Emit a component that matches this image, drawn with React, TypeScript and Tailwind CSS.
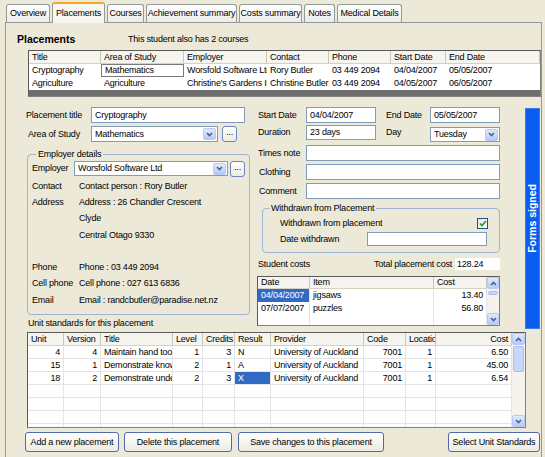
import React from 'react';

type Col = { label: string; w: string; right?: boolean; headRight?: boolean };

const tabs = [
  { label: 'Overview', w: 'w-[44px]' },
  { label: 'Placements', w: 'w-[53px]', active: true },
  { label: 'Courses', w: 'w-[37px]' },
  { label: 'Achievement summary', w: 'w-[91px]' },
  { label: 'Costs summary', w: 'w-[63px]' },
  { label: 'Notes', w: 'w-[31px]' },
  { label: 'Medical Details', w: 'w-[65px]' },
];

const placementCols: Col[] = [
  { label: 'Title', w: 'w-[72px]' },
  { label: 'Area of Study', w: 'w-[83px]' },
  { label: 'Employer', w: 'w-[83px]' },
  { label: 'Contact', w: 'w-[62px]' },
  { label: 'Phone', w: 'w-[62px]' },
  { label: 'Start Date', w: 'w-[55px]' },
  { label: 'End Date', w: 'flex-1' },
];

const placements = [
  ['Cryptography', 'Mathematics', 'Worsfold Software Ltd', 'Rory Butler', '03 449 2094', '04/04/2007', '05/05/2007'],
  ['Agriculture', 'Agriculture', "Christine's Gardens Inc", 'Christine Butler', '03 449 2094', '04/05/2007', '06/05/2007'],
];

const unitCols: Col[] = [
  { label: 'Unit', w: 'w-[36px]', right: true },
  { label: 'Version', w: 'w-[37px]', right: true },
  { label: 'Title', w: 'w-[72px]' },
  { label: 'Level', w: 'w-[30px]', right: true },
  { label: 'Credits', w: 'w-[32px]', right: true },
  { label: 'Result', w: 'w-[36px]' },
  { label: 'Provider', w: 'w-[93px]' },
  { label: 'Code', w: 'w-[42px]', right: true },
  { label: 'Locatio', w: 'w-[30px]', right: true },
  { label: 'Cost', w: 'flex-1', right: true, headRight: true },
];

const units = [
  ['4', '4', 'Maintain hand tools', '1', '3', 'N', 'University of Auckland', '7001', '1', '6.50'],
  ['15', '1', 'Demonstrate knowledge', '2', '1', 'A', 'University of Auckland', '7001', '1', '45.00'],
  ['18', '2', 'Demonstrate understanding', '2', '3', 'X', 'University of Auckland', '7001', '1', '6.54'],
  ['', '', '', '', '', '', '', '', '', ''],
  ['', '', '', '', '', '', '', '', '', ''],
  ['', '', '', '', '', '', '', '', '', ''],
  ['', '', '', '', '', '', '', '', '', ''],
];

const costCols: Col[] = [
  { label: 'Date', w: 'w-[52px]' },
  { label: 'Item', w: 'w-[124px]' },
  { label: 'Cost', w: 'flex-1', right: true },
];

const costs = [
  ['04/04/2007', 'jigsaws', '13.40'],
  ['07/07/2007', 'puzzles', '56.80'],
  ['', '', ''],
];

const contactRows = [
  ['Contact', 'Contact person : Rory Butler'],
  ['Address', 'Address : 26 Chandler Crescent'],
  ['', 'Clyde'],
  ['', 'Central Otago 9330'],
  ['', ''],
  ['Phone', 'Phone : 03 449 2094'],
  ['Cell phone', 'Cell phone : 027 613 6836'],
  ['Email', 'Email : randcbutler@paradise.net.nz'],
];

function TextBox({ value = '', className = '' }: { value?: string; className?: string }) {
  return (
    <div className={`bg-white border border-[#7F9DB9] flex items-center pl-[3px] whitespace-nowrap overflow-hidden ${className}`}>
      {value}
    </div>
  );
}

function Arrow({ up = false }: { up?: boolean }) {
  return (
    <svg width="7" height="5" viewBox="0 0 7 5">
      <path d={up ? 'M1 4L3.5 1.5L6 4' : 'M1 1L3.5 3.5L6 1'} stroke="#4D6185" strokeWidth="1.6" fill="none" />
    </svg>
  );
}

function DropButton({ className = '' }: { className?: string }) {
  return (
    <div className={`rounded-[2px] border border-[#B7CAF5] bg-linear-to-b from-[#E1EAFE] to-[#B4CAF8] flex items-center justify-center ${className}`}>
      <Arrow />
    </div>
  );
}

function DropButtonUp() {
  return (
    <div className="h-[12px] rounded-[2px] border border-[#B7CAF5] bg-linear-to-b from-[#E1EAFE] to-[#B4CAF8] flex items-center justify-center">
      <Arrow up />
    </div>
  );
}

function Combo({ value, className = '' }: { value: string; className?: string }) {
  return (
    <div className={`bg-white border border-[#7F9DB9] flex items-center pl-[3px] pr-px ${className}`}>
      <span className="flex-1 whitespace-nowrap overflow-hidden">{value}</span>
      <DropButton className="w-[13px] h-[12px]" />
    </div>
  );
}

function Ellipsis({ className = '' }: { className?: string }) {
  return (
    <div className={`w-[15px] rounded-[3px] border border-[#6F84C0] bg-linear-to-b from-white to-[#ECEBE6] flex items-center justify-center pb-[3px] ${className}`}>
      ...
    </div>
  );
}

function ScrollBar({ thumb, className = '' }: { thumb: string; className?: string }) {
  return (
    <div className={`flex flex-col bg-[#F4F3EE] ${className}`}>
      <DropButtonUp />
      <div className="flex-1 px-px">
        <div className={`rounded-[2px] border border-[#A9BFF3] bg-[#C6D6FC] ${thumb}`} />
      </div>
      <DropButton className="h-[12px]" />
    </div>
  );
}

function HeaderRow({ cols, className = '' }: { cols: Col[]; className?: string }) {
  return (
    <div className={`flex bg-[#F5F4EE] border-b border-[#D6D2C2] ${className}`}>
      {cols.map((c, i) => (
        <div
          key={i}
          className={`${c.w} px-[3px] flex items-center border-r border-[#CBC7B8] whitespace-nowrap overflow-hidden ${c.headRight ? 'justify-end' : ''}`}
        >
          {c.label}
        </div>
      ))}
    </div>
  );
}

function Tabs() {
  return (
    <div className="flex items-end h-[20px] pl-[6px] gap-[2px]">
      {tabs.map((t) =>
        t.active ? (
          <div
            key={t.label}
            className={`${t.w} h-[21px] -mb-px relative z-10 border border-b-0 border-[#919B9C] border-t-[#F5A623] border-t-2 rounded-t-[3px] bg-[#F7F6F1] flex items-center justify-center whitespace-nowrap`}
          >
            {t.label}
          </div>
        ) : (
          <div
            key={t.label}
            className={`${t.w} h-[18px] border border-b-0 border-[#919B9C] rounded-t-[3px] bg-linear-to-b from-white to-[#ECEBE6] flex items-center justify-center whitespace-nowrap`}
          >
            {t.label}
          </div>
        ),
      )}
    </div>
  );
}

function PlacementsGrid() {
  return (
    <div className="mt-[4px] ml-[22px] w-[513px] h-[47px] border border-[#808080] border-l-[#5A5A5A] border-t-[#5A5A5A] flex flex-col overflow-hidden bg-white">
      <HeaderRow cols={placementCols} className="h-[13px] shrink-0" />
      {placements.map((row, r) => (
        <div key={r} className="flex h-[13px] shrink-0">
          {row.map((cell, i) => (
            <div
              key={i}
              className={`${placementCols[i].w} px-[3px] flex items-center whitespace-nowrap overflow-hidden ${
                r === 0 && i === 1 ? 'border border-[#7A7A7A] px-[2px]' : ''
              }`}
            >
              {cell}
            </div>
          ))}
        </div>
      ))}
      <div className="flex-1 bg-[#6E6E6E]" />
    </div>
  );
}

function EmployerGroup() {
  return (
    <fieldset className="mt-[6px] ml-[1px] w-[223px] border border-[#9FB3D6] rounded-[4px] px-[4px] pb-[6px]">
      <legend className="ml-[4px] px-[2px] leading-[12px]">Employer details</legend>
      <div className="mt-px h-[15px] flex items-center">
        <div className="w-[42px]">Employer</div>
        <Combo value="Worsfold Software Ltd" className="w-[154px] h-[15px]" />
        <Ellipsis className="ml-[2px] h-[16px]" />
      </div>
      <div className="mt-[2px]">
        {contactRows.map(([label, value], i) => (
          <div key={i} className="h-[16.3px] flex items-center">
            <div className="w-[47px] whitespace-nowrap">{label}</div>
            <div className="whitespace-nowrap">{value}</div>
          </div>
        ))}
      </div>
    </fieldset>
  );
}

function LeftColumn() {
  return (
    <div className="ml-[20px] w-[224px] mt-[10px]">
      <div className="h-[16px] flex items-center">
        <div className="w-[65px] whitespace-nowrap">Placement title</div>
        <TextBox value="Cryptography" className="w-[154px] h-[16px]" />
      </div>
      <div className="mt-[3px] h-[16px] flex items-center">
        <div className="w-[65px] pl-[2px] whitespace-nowrap">Area of Study</div>
        <Combo value="Mathematics" className="w-[127px] h-[16px]" />
        <Ellipsis className="ml-[4px] h-[16px]" />
      </div>
      <EmployerGroup />
      <div className="mt-[2px] h-[12px] pl-[2px] flex items-center">Unit standards for this placement</div>
    </div>
  );
}

function CostsGrid() {
  return (
    <div className="mt-[4px] w-[243px] h-[50px] border border-[#808080] border-l-[#5A5A5A] border-t-[#5A5A5A] flex bg-white overflow-hidden">
      <div className="flex-1 flex flex-col">
        <HeaderRow cols={costCols} className="h-[12px] shrink-0" />
        {costs.map((row, r) => (
          <div key={r} className="flex h-[13px] shrink-0">
            {row.map((cell, i) => (
              <div
                key={i}
                className={`${costCols[i].w} px-[3px] flex items-center whitespace-nowrap overflow-hidden border-r border-[#E4E4E4] ${
                  costCols[i].right ? 'justify-end' : ''
                } ${r === 0 && i === 0 ? 'bg-[#316AC5] text-white' : ''}`}
              >
                {cell}
              </div>
            ))}
          </div>
        ))}
      </div>
      <ScrollBar thumb="mt-[2px] h-[4px]" className="w-[12px]" />
    </div>
  );
}

function RightColumn() {
  return (
    <div className="ml-[7px] w-[243px] mt-[10px]">
      <div className="h-[16px] flex items-center">
        <div className="w-[49px] pl-px whitespace-nowrap">Start Date</div>
        <TextBox value="04/04/2007" className="w-[70px] h-[16px]" />
        <div className="ml-[10px] w-[44px] whitespace-nowrap">End Date</div>
        <TextBox value="05/05/2007" className="w-[70px] h-[16px]" />
      </div>
      <div className="mt-[2px] h-[17px] flex items-start">
        <div className="w-[49px] pl-px h-[15px] flex items-center">Duration</div>
        <TextBox value="23 days" className="w-[70px] h-[15px]" />
        <div className="ml-[10px] w-[44px] h-[15px] flex items-center">Day</div>
        <Combo value="Tuesday" className="mt-[2px] w-[70px] h-[15px]" />
      </div>
      <div className="mt-[3px] h-[16px] flex items-center">
        <div className="w-[49px] pl-px whitespace-nowrap">Times note</div>
        <TextBox className="w-[194px] h-[16px]" />
      </div>
      <div className="mt-[3px] h-[16px] flex items-center">
        <div className="w-[49px] pl-[2px]">Clothing</div>
        <TextBox className="w-[194px] h-[16px]" />
      </div>
      <div className="mt-[3px] h-[16px] flex items-center">
        <div className="w-[49px] pl-[2px]">Comment</div>
        <TextBox className="w-[194px] h-[16px]" />
      </div>
      <fieldset className="mt-[3px] ml-[5px] w-[238px] border border-[#9FB3D6] rounded-[4px] pb-[6px]">
        <legend className="ml-[6px] px-[2px] leading-[12px]">Withdrawn from Placement</legend>
        <div className="mt-[3px] h-[12px] flex items-center pl-[17px] pr-[11px]">
          <div className="flex-1">Withdrawn from placement</div>
          <div className="w-[11px] h-[11px] border border-[#1C5180] bg-linear-to-br from-[#E6E6E0] to-white flex items-center justify-center">
            <svg width="8" height="7" viewBox="0 0 8 7">
              <path d="M1 3.5L3 5.5L7 1" stroke="#21A121" strokeWidth="1.7" fill="none" />
            </svg>
          </div>
        </div>
        <div className="mt-[3px] h-[14px] flex items-center pl-[17px]">
          <div className="w-[87px]">Date withdrawn</div>
          <TextBox className="w-[120px] h-[14px]" />
        </div>
      </fieldset>
      <div className="mt-[3px] h-[16px] flex items-center">
        <div className="w-[117px] pl-px">Student costs</div>
        <div className="w-[81px] whitespace-nowrap">Total placement cost</div>
        <div className="w-[45px] h-[12px] bg-white pl-[2px] flex items-center">128.24</div>
      </div>
      <CostsGrid />
    </div>
  );
}

function UnitGrid() {
  return (
    <div className="ml-[21px] w-[499px] h-[96px] border border-[#808080] border-l-[#5A5A5A] border-t-[#5A5A5A] flex bg-white overflow-hidden">
      <div className="flex-1 flex flex-col overflow-hidden">
        <HeaderRow cols={unitCols} className="h-[13px] shrink-0" />
        {units.map((row, r) => (
          <div key={r} className="flex h-[13px] shrink-0 border-b border-[#E4E4E4]">
            {row.map((cell, i) => (
              <div
                key={i}
                className={`${unitCols[i].w} px-[3px] flex items-center whitespace-nowrap overflow-hidden border-r border-[#E4E4E4] ${
                  unitCols[i].right ? 'justify-end' : ''
                } ${r === 2 && i === 5 ? 'bg-[#316AC5] text-white' : ''}`}
              >
                {cell}
              </div>
            ))}
          </div>
        ))}
      </div>
      <ScrollBar thumb="mt-px h-[26px]" className="w-[13px]" />
    </div>
  );
}

function Button({ label, className = '' }: { label: string; className?: string }) {
  return (
    <div className={`h-[20px] rounded-[3px] border border-[#5169AD] bg-linear-to-b from-white to-[#EBEAE3] flex items-center justify-center whitespace-nowrap ${className}`}>
      {label}
    </div>
  );
}

export default function App() {
  return (
    <div className="w-[545px] h-[457px] overflow-hidden bg-[#ECE9D8] text-black font-['Liberation_Sans',Arial,sans-serif] text-[9px] tracking-[-0.2px] leading-none pt-[2px]">
      <Tabs />
      <div className="ml-[5px] w-[537px] h-[440px] border border-[#919B9C] bg-[#ECE9D8]">
        <div className="flex items-center h-[14px] mt-[9px]">
          <div className="w-[122px] pl-[11px] font-bold text-[10.5px] tracking-normal">Placements</div>
          <div>This student also has 2 courses</div>
        </div>
        <PlacementsGrid />
        <div className="flex items-start h-[235px]">
          <LeftColumn />
          <RightColumn />
          <div className="ml-[25px] mt-[11px] w-[15px] h-[221px] bg-[#0B5DF0] border border-[#3A7BF2] flex items-center justify-center">
            <span className="[writing-mode:vertical-rl] rotate-180 text-white font-bold text-[10.5px] tracking-normal whitespace-nowrap">
              Forms signed
            </span>
          </div>
        </div>
        <UnitGrid />
        <div className="mt-[4px] flex">
          <Button label="Add a new placement" className="ml-[19px] w-[94px]" />
          <Button label="Delete this placement" className="ml-[5px] w-[108px]" />
          <Button label="Save changes to this placement" className="ml-[6px] w-[146px]" />
          <Button label="Select Unit Standards" className="ml-[64px] w-[92px]" />
        </div>
      </div>
    </div>
  );
}
